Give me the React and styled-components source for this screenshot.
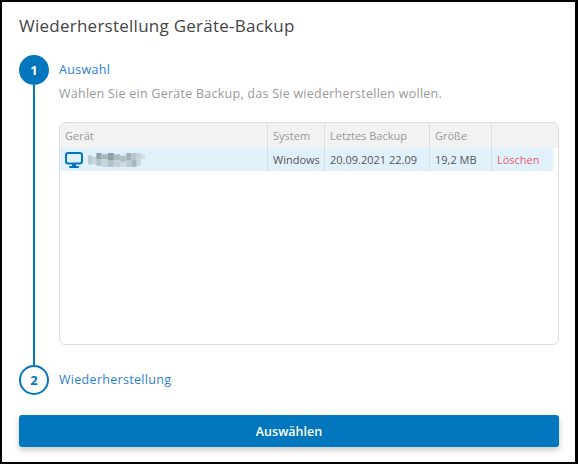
import React from 'react'
import styled, { createGlobalStyle } from 'styled-components'

const GlobalStyle = createGlobalStyle`
    html, body {
        margin: 0;
        padding: 0;
        background: #000;
    }
    * {
        box-sizing: border-box;
    }
`;

const columns = '207px 57px 105px 62px 62px';

const rows = [
    { system: 'Windows', date: '20.09.2021 22.09', size: '19,2 MB' },
];

const mosaic = [
    [0, 2, 4, 7, '#bccad3'], [4, 3, 4, 6, '#c8d5dd'], [8, 0, 5, 5, '#93a3ae'], [8, 5, 5, 5, '#b4c2cc'],
    [13, 1, 6, 4, '#a6b5c0'], [13, 5, 6, 6, '#c8d5de'], [19, 0, 6, 6, '#8f9faa'], [19, 6, 6, 5, '#b4c2cc'],
    [25, 1, 6, 5, '#adbcc6'], [25, 6, 6, 5, '#c4d1da'], [31, 2, 6, 5, '#b2c0ca'], [31, 7, 6, 4, '#ccd9e1'],
    [37, 0, 5, 6, '#a0afba'], [37, 6, 5, 5, '#bdcad4'], [42, 0, 5, 5, '#b8c5cf'], [42, 5, 5, 6, '#aab8c3'],
    [47, 0, 4, 5, '#c6d3dc'], [47, 5, 4, 5, '#c9d6df'], [51, 1, 4, 4, '#d0dde6'],
];

function MonitorIcon() {
    return (
        <svg width="18" height="16" viewBox="0 0 18 16" aria-hidden="true">
            <rect x="1" y="1" width="16" height="10.5" rx="2.2" fill="none" stroke="#0277bd" strokeWidth="2" />
            <rect x="7" y="12" width="4" height="2" fill="#0277bd" />
            <rect x="4" y="14" width="10" height="2" rx="1" fill="#0277bd" />
        </svg>
    )
}

function BlurredName() {
    return (
        <svg width="58" height="14" viewBox="0 0 56 11" preserveAspectRatio="none" aria-hidden="true">
            <defs>
                <filter id="soft" x="-5%" y="-20%" width="110%" height="140%">
                    <feGaussianBlur stdDeviation="0.6" />
                </filter>
            </defs>
            <g filter="url(#soft)">
                {mosaic.map(([x, y, w, h, fill], i) => (
                    <rect key={i} x={x} y={y} width={w} height={h} fill={fill} />
                ))}
            </g>
        </svg>
    )
}

function App() {
    return (
        <>
            <GlobalStyle />
            <Dialog>
                <Title>Wiederherstellung Geräte-Backup</Title>
                <Steps>
                    <Step>
                        <Rail>
                            <Badge $active>1</Badge>
                            <Line />
                        </Rail>
                        <StepBody>
                            <StepLabel>Auswahl</StepLabel>
                            <Hint>Wählen Sie ein Geräte Backup, das Sie wiederherstellen wollen.</Hint>
                            <Table>
                                <HeadRow>
                                    <HeadCell>Gerät</HeadCell>
                                    <HeadCell>System</HeadCell>
                                    <HeadCell>Letztes Backup</HeadCell>
                                    <HeadCell>Größe</HeadCell>
                                    <HeadCell />
                                </HeadRow>
                                {rows.map((row) => (
                                    <DataRow key={row.date}>
                                        <DeviceCell>
                                            <MonitorIcon />
                                            <BlurredName />
                                        </DeviceCell>
                                        <Cell>{row.system}</Cell>
                                        <Cell>{row.date}</Cell>
                                        <Cell>{row.size}</Cell>
                                        <DeleteCell>Löschen</DeleteCell>
                                    </DataRow>
                                ))}
                            </Table>
                        </StepBody>
                    </Step>
                    <LastStep>
                        <Badge>2</Badge>
                        <StepLabel>Wiederherstellung</StepLabel>
                    </LastStep>
                </Steps>
                <PrimaryButton>Auswählen</PrimaryButton>
            </Dialog>
        </>
    )
}

const Dialog = styled.div`
    width: 573px;
    height: 460px;
    margin: 2px 3px 2px 2px;
    padding: 12px 17px 0;
    background: #fff;
    font-family: "Open Sans", "Noto Sans", sans-serif;
    display: flex;
    flex-direction: column;
`;

const Title = styled.h1`
    margin: 0 0 18px;
    font-size: 17px;
    line-height: 23px;
    font-weight: 400;
    letter-spacing: 0.25px;
    color: #444;
`;

const Steps = styled.div`
    display: flex;
    flex-direction: column;
`;

const Step = styled.div`
    display: flex;
    gap: 10px;
`;

const LastStep = styled.div`
    display: flex;
    align-items: center;
    gap: 10px;
`;

const Rail = styled.div`
    width: 30px;
    flex: none;
    display: flex;
    flex-direction: column;
    align-items: center;
`;

const Badge = styled.div`
    width: 30px;
    height: 30px;
    flex: none;
    border-radius: 50%;
    border: 2px solid #0277bd;
    background: ${(p) => (p.$active ? '#0277bd' : '#fff')};
    color: ${(p) => (p.$active ? '#fff' : '#0277bd')};
    font-size: 13px;
    font-weight: 700;
    display: flex;
    align-items: center;
    justify-content: center;
`;

const Line = styled.div`
    width: 2px;
    flex: 1;
    background: #0277bd;
`;

const StepBody = styled.div`
    flex: 1;
    min-width: 0;
    padding-top: 6px;
`;

const StepLabel = styled.div`
    font-size: 12.5px;
    line-height: 18px;
    color: #2a7fd4;
    letter-spacing: 0.3px;
`;

const Hint = styled.p`
    margin: 6px 0 20px;
    font-size: 12.5px;
    line-height: 17px;
    letter-spacing: 0.25px;
    color: #999;
`;

const Table = styled.div`
    width: 500px;
    height: 223px;
    border: 1px solid #ddd;
    border-radius: 6px;
    margin-bottom: 20px;
    overflow: hidden;
    font-size: 11px;
`;

const HeadRow = styled.div`
    display: grid;
    grid-template-columns: ${columns};
    height: 25px;
    background: #f2f2f2;
    color: #999;
`;

const HeadCell = styled.div`
    display: flex;
    align-items: center;
    padding-left: 5px;
    border-left: 1px solid #ddd;
    &:first-child {
        border-left: 0;
    }
`;

const DataRow = styled.div`
    display: grid;
    grid-template-columns: ${columns};
    height: 23px;
    width: 493px;
    background: #e1f1fb;
    color: #555;
`;

const Cell = styled.div`
    display: flex;
    align-items: center;
    padding-left: 5px;
    white-space: nowrap;
    border-left: 1px solid #d8dfe3;
`;

const DeviceCell = styled(Cell)`
    gap: 5px;
    border-left: 0;
`;

const DeleteCell = styled(Cell)`
    color: #ee5a6e;
`;

const PrimaryButton = styled.button`
    width: 540px;
    height: 32px;
    margin-top: 20px;
    border: 0;
    border-radius: 3px;
    background: #0277bd;
    color: #fff;
    font-family: inherit;
    font-size: 12.5px;
    font-weight: 600;
    box-shadow: 0 3px 6px rgba(0, 0, 0, 0.22);
`;

export default App
